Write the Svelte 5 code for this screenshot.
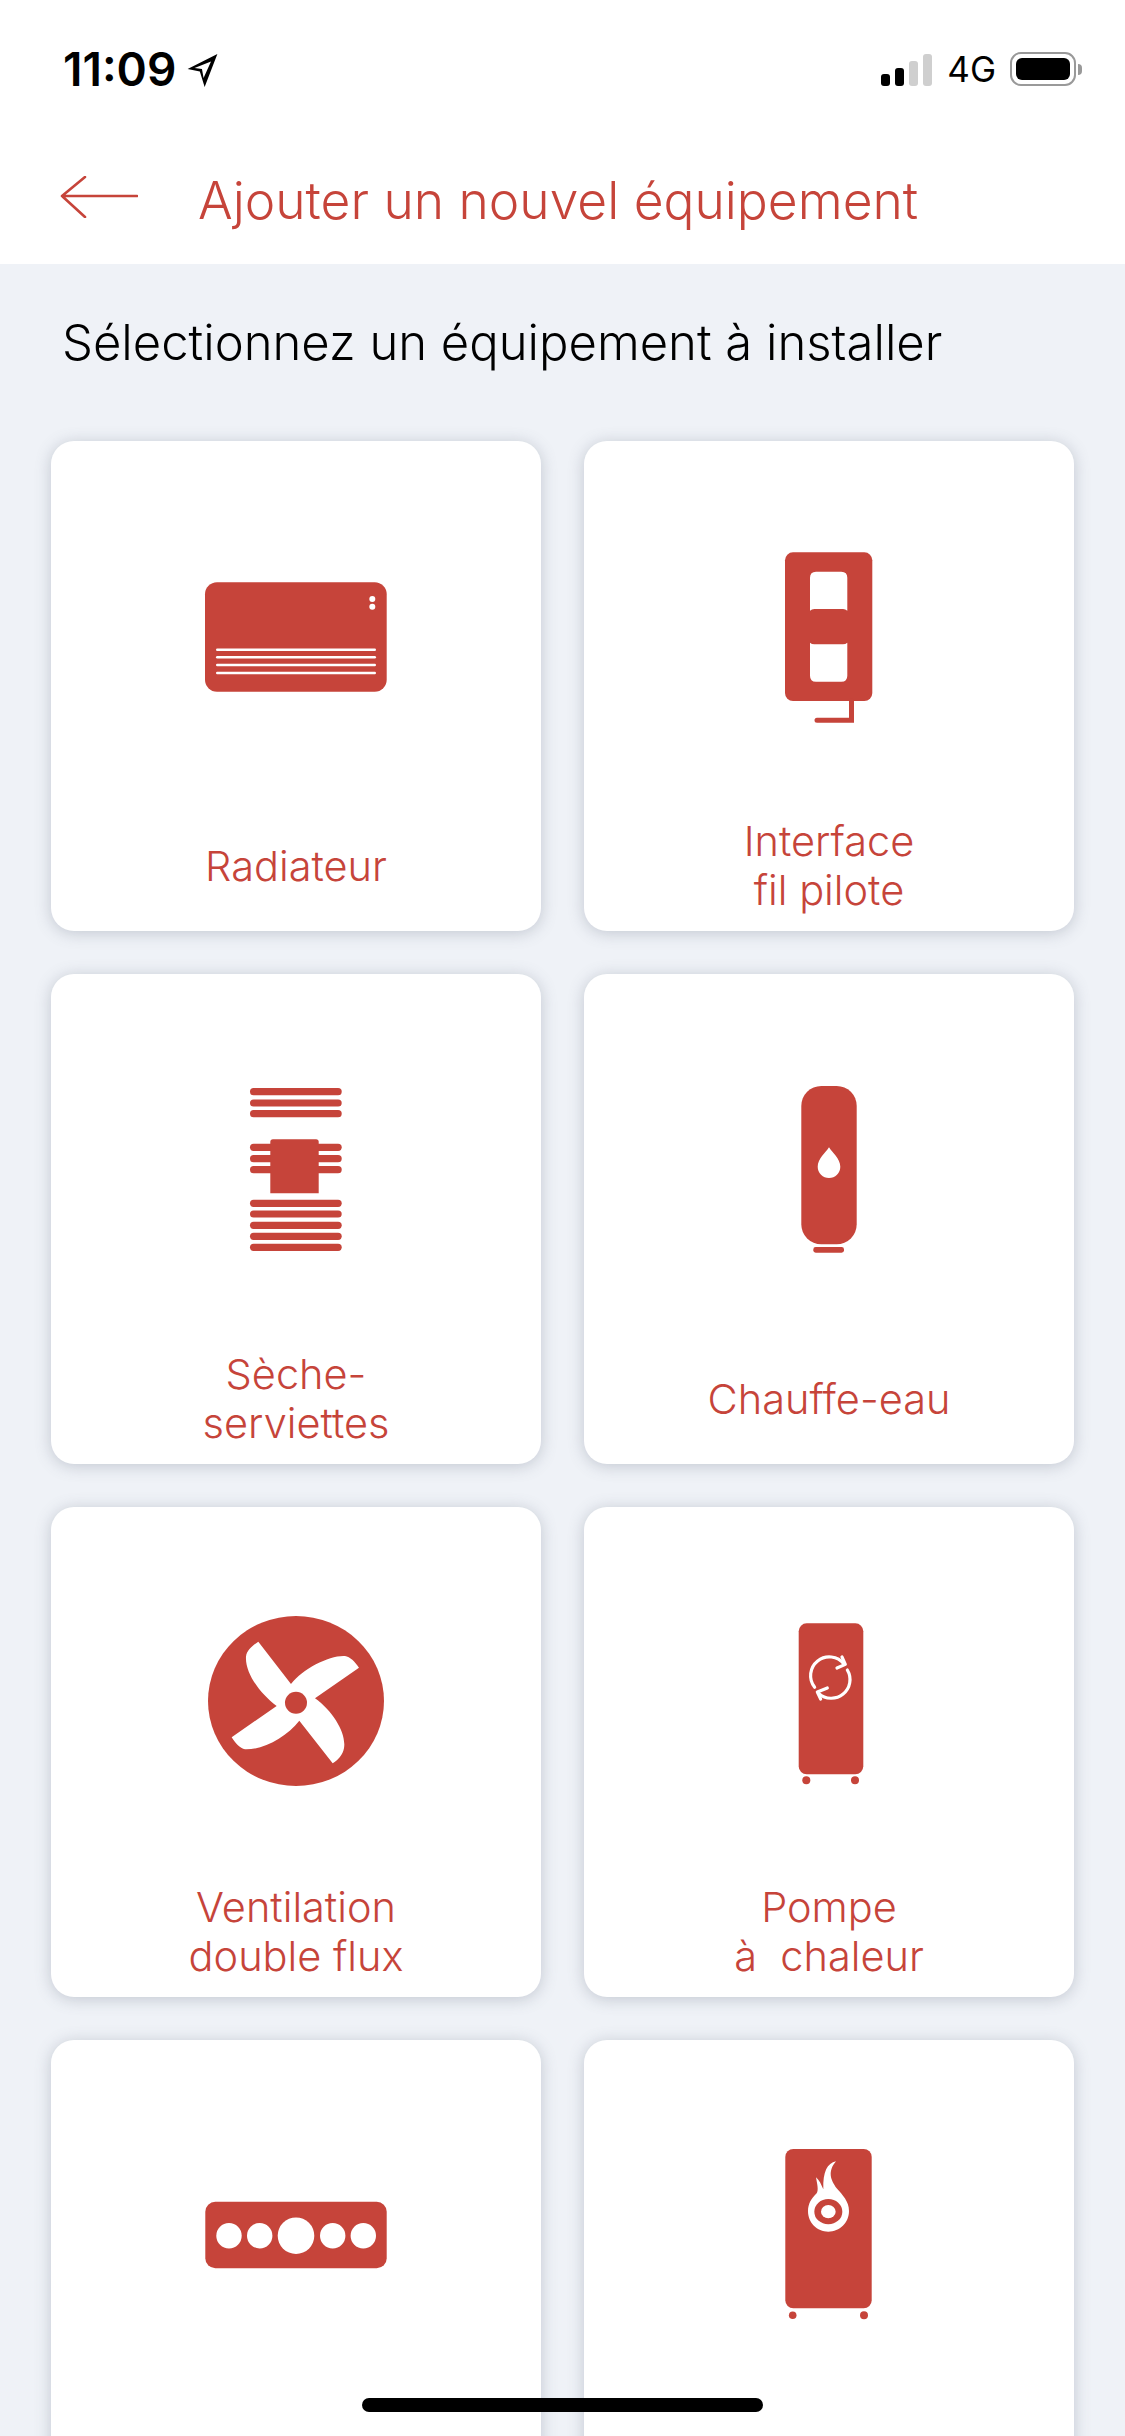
<script lang="ts">
  const red = '#c6443a';

  // left to right, top to bottom
  const items = [
    { id: 'radiator', label: ['Radiateur'] },
    { id: 'interface', label: ['Interface', 'fil pilote'] },
    { id: 'towel', label: ['Sèche-', 'serviettes'] },
    { id: 'boiler', label: ['Chauffe-eau'] },
    { id: 'fan', label: ['Ventilation', 'double flux'] },
    { id: 'pump', label: ['Pompe', 'à\u00a0 chaleur'] },
    { id: 'led', label: [] },
    { id: 'stove', label: [] }
  ];

  const towelBars = [31.7, 43, 53.7, 87.3, 98.7, 109.7, 143.3, 154, 165.3, 176.3, 187.3];
  const radiatorLines = [122.7, 130.3, 138, 146];
  const ledDots = [
    { x: 43, r: 12.7 },
    { x: 73.7, r: 12.7 },
    { x: 110, r: 18.3 },
    { x: 146.7, r: 12.7 },
    { x: 177.3, r: 12.7 }
  ];
</script>

<div class="screen">
  <header class="top">
    <div class="status">
      <div class="clock">
        <span>11:09</span>
        <svg class="locate" viewBox="0 0 29 32" width="31" height="34" aria-hidden="true">
          <path d="M28.5 1 L0.5 15 L12 17.5 L16.5 32 Z M22.5 8 L15.5 23.5 L14 15 L7 14 Z" fill="#000" fill-rule="evenodd" />
        </svg>
      </div>
      <div class="indicators">
        <div class="signal">
          <i class="on h1"></i>
          <i class="on h2"></i>
          <i class="h3"></i>
          <i class="h4"></i>
        </div>
        <span class="network">4G</span>
        <div class="battery"><b></b></div>
        <div class="nub"></div>
      </div>
    </div>
    <nav class="bar">
      <svg class="back" viewBox="0 0 78 42" width="78" height="42" aria-hidden="true">
        <path d="M77 20 H2 M25 1 L2 20 L25 41" fill="none" stroke={red} stroke-width="2.6" stroke-linecap="round" stroke-linejoin="round" />
      </svg>
      <h1>Ajouter un nouvel équipement</h1>
    </nav>
  </header>

  <main>
    <p class="lead">Sélectionnez un équipement à installer</p>
    <div class="grid">
      {#each items as item}
        <div class="card">
          <svg class="icon" viewBox="0 0 220 220" width="220" height="220" aria-hidden="true">
            {#if item.id === 'radiator'}
              <rect x="19" y="55.3" width="181.7" height="109.4" rx="12" fill={red} />
              {#each radiatorLines as y}
                <rect x="30" y={y - 1.2} width="160" height="2.4" rx="1.2" fill="#fff" />
              {/each}
              <circle cx="186.3" cy="72" r="3" fill="#fff" />
              <circle cx="186.3" cy="79.7" r="3" fill="#fff" />
            {:else if item.id === 'interface'}
              <rect x="66" y="25.3" width="87.3" height="148.7" rx="8" fill={red} />
              <path d="M97 44.7 H122.3 Q128.3 44.7 128.3 50.7 V83.7 Q126.5 82 124 82 H95.3 Q92.8 82 91 83.7 V50.7 Q91 44.7 97 44.7 Z" fill="#fff" />
              <path d="M91 115.7 Q92.8 117.2 95.3 117.2 H124 Q126.5 117.2 128.3 115.7 V148.7 Q128.3 154.7 122.3 154.7 H97 Q91 154.7 91 148.7 Z" fill="#fff" />
              <path d="M132.5 174 V193.3 H98" fill="none" stroke={red} stroke-width="5" stroke-linecap="round" />
            {:else if item.id === 'towel'}
              {#each towelBars as y}
                <rect x="64" y={y - 3.6} width="91.7" height="7.2" rx="3.6" fill={red} />
              {/each}
              <path d="M84.3 133.3 V81.8 Q84.3 79.3 87 79.3 H130 Q132.7 79.3 132.7 81.8 V133.3 Z" fill={red} />
            {:else if item.id === 'boiler'}
              <rect x="82.3" y="26" width="55.4" height="158.3" rx="20" fill={red} />
              <rect x="94.3" y="187" width="30.7" height="5.7" rx="2.4" fill={red} />
              <path d="M110 87.3 C113 92.5 121.3 98.5 121.3 106.7 A11.3 11.3 0 0 1 98.7 106.7 C98.7 98.5 107 92.5 110 87.3 Z" fill="#fff" />
            {:else if item.id === 'fan'}
              <ellipse cx="110" cy="108" rx="88" ry="85" fill={red} />
              <g transform="translate(4 7) scale(0.3333)">
                <path d="M205 125 L303 252 C340 205 420 165 465 168 C480 170 495 185 507 203 L375 295 C430 335 470 400 462 445 C458 465 445 480 428 490 L328 362 C290 410 220 450 165 448 C150 445 135 428 125 412 L260 318 C210 280 165 220 168 170 C170 150 190 135 205 125 Z" fill="#fff" />
                <circle cx="318" cy="308" r="33" fill={red} />
              </g>
            {:else if item.id === 'pump'}
              <rect x="79.7" y="30.3" width="64.6" height="151" rx="8" fill={red} />
              <circle cx="87.3" cy="187.3" r="4" fill={red} />
              <circle cx="136" cy="187.3" r="4" fill={red} />
              <g transform="translate(51 7) scale(0.3333)" fill="none" stroke="#fff" stroke-width="9.5" stroke-linecap="round" stroke-linejoin="round">
                <path d="M134 262 A56 56 0 0 1 222 192" />
                <path d="M216 171 L226 193 L201 204" />
                <path d="M232 210 A56 56 0 0 1 146 280" />
                <path d="M172 264 L142 276 L152 297" />
              </g>
            {:else if item.id === 'led'}
              <rect x="19.3" y="75.7" width="181.4" height="66.6" rx="10" fill={red} />
              {#each ledDots as dot}
                <circle cx={dot.x} cy="109.7" r={dot.r} fill="#fff" />
              {/each}
            {:else if item.id === 'stove'}
              <rect x="66.3" y="23" width="86.4" height="159.3" rx="8" fill={red} />
              <circle cx="73.7" cy="189.3" r="3.8" fill={red} />
              <circle cx="145" cy="189.3" r="4" fill={red} />
              <g transform="translate(51 4) scale(0.3333)">
                <path d="M198 94 C172 100 158 125 160 178 C154 165 148 150 138 142 C142 165 146 180 140 190 C124 205 114 222 114 243 C114 278 141 305 175 305 C209 305 237 278 237 243 C237 215 218 195 200 175 C182 150 172 125 198 94 Z" fill="#fff" />
                <ellipse cx="175" cy="245" rx="42" ry="38" fill={red} />
                <ellipse cx="175" cy="245" rx="22" ry="20" fill="#fff" />
              </g>
            {/if}
          </svg>
          <div class="label">
            {#each item.label as line}
              <span>{line}</span>
            {/each}
          </div>
        </div>
      {/each}
    </div>
  </main>

  <div class="home"></div>
</div>

<style>
  :global(body) {
    margin: 0;
    background: #eff2f7;
  }

  .screen {
    position: relative;
    width: 1125px;
    height: 2436px;
    overflow: hidden;
    background: #eff2f7;
    font-family: Inter, "Liberation Sans", sans-serif;
  }

  .top {
    height: 264px;
    background: #fff;
  }

  .status {
    display: flex;
    justify-content: space-between;
    align-items: center;
    height: 138px;
    padding: 0 43px 0 63px;
    box-sizing: border-box;
  }

  .clock {
    display: flex;
    align-items: center;
    gap: 11px;
    font-size: 46px;
    font-weight: 600;
    color: #000;
  }

  .locate {
    margin-top: 1px;
  }

  .indicators {
    display: flex;
    align-items: center;
    color: #000;
  }

  .signal {
    display: flex;
    align-items: flex-end;
    gap: 5px;
    height: 33px;
    margin-top: 1px;
  }

  .signal i {
    display: block;
    width: 9px;
    border-radius: 3px;
    background: #cfcfcf;
  }

  .signal i.on {
    background: #000;
  }

  .h1 { height: 12px; }
  .h2 { height: 18px; }
  .h3 { height: 25px; }
  .h4 { height: 32px; }

  .network {
    margin-left: 15px;
    font-size: 35px;
    line-height: 38px;
    font-weight: 400;
  }

  .battery {
    box-sizing: border-box;
    width: 66px;
    height: 34px;
    margin-left: 14px;
    padding: 4px;
    border: 2px solid #999;
    border-radius: 11px;
  }

  .battery b {
    display: block;
    height: 100%;
    border-radius: 6px;
    background: #000;
  }

  .nub {
    width: 4px;
    height: 11px;
    margin-left: 2px;
    border-radius: 0 4px 4px 0;
    background: #999;
  }

  .bar {
    display: flex;
    align-items: center;
    height: 126px;
    padding-left: 60px;
  }

  .back {
    flex: none;
    margin-top: -8px;
  }

  h1 {
    margin: -2px 0 0 60px;
    font-size: 51.5px;
    font-weight: 350;
    color: #c6443a;
    white-space: nowrap;
  }

  main {
    padding: 0 51px;
  }

  .lead {
    margin: 0;
    padding: 51px 0 0 11px;
    height: 123px;
    box-sizing: border-box;
    font-size: 49px;
    line-height: 56px;
    font-weight: 350;
    color: #000;
    white-space: nowrap;
  }

  .grid {
    display: grid;
    grid-template-columns: 490px 490px;
    grid-auto-rows: 490px;
    gap: 43px;
    margin-top: 54px;
  }

  .card {
    display: flex;
    flex-direction: column;
    align-items: center;
    padding-top: 86px;
    box-sizing: border-box;
    border-radius: 23px;
    background: #fff;
    box-shadow: 0 2px 16px rgba(90, 100, 120, 0.3);
  }

  .icon {
    flex: none;
  }

  .label {
    display: flex;
    flex-direction: column;
    align-items: center;
    justify-content: center;
    height: 100px;
    margin-top: 69px;
    font-size: 41.5px;
    line-height: 49px;
    font-weight: 350;
    color: #c6443a;
    white-space: nowrap;
  }

  .home {
    position: absolute;
    left: 362px;
    top: 2398px;
    width: 401px;
    height: 14px;
    border-radius: 7px;
    background: #000;
  }
</style>
